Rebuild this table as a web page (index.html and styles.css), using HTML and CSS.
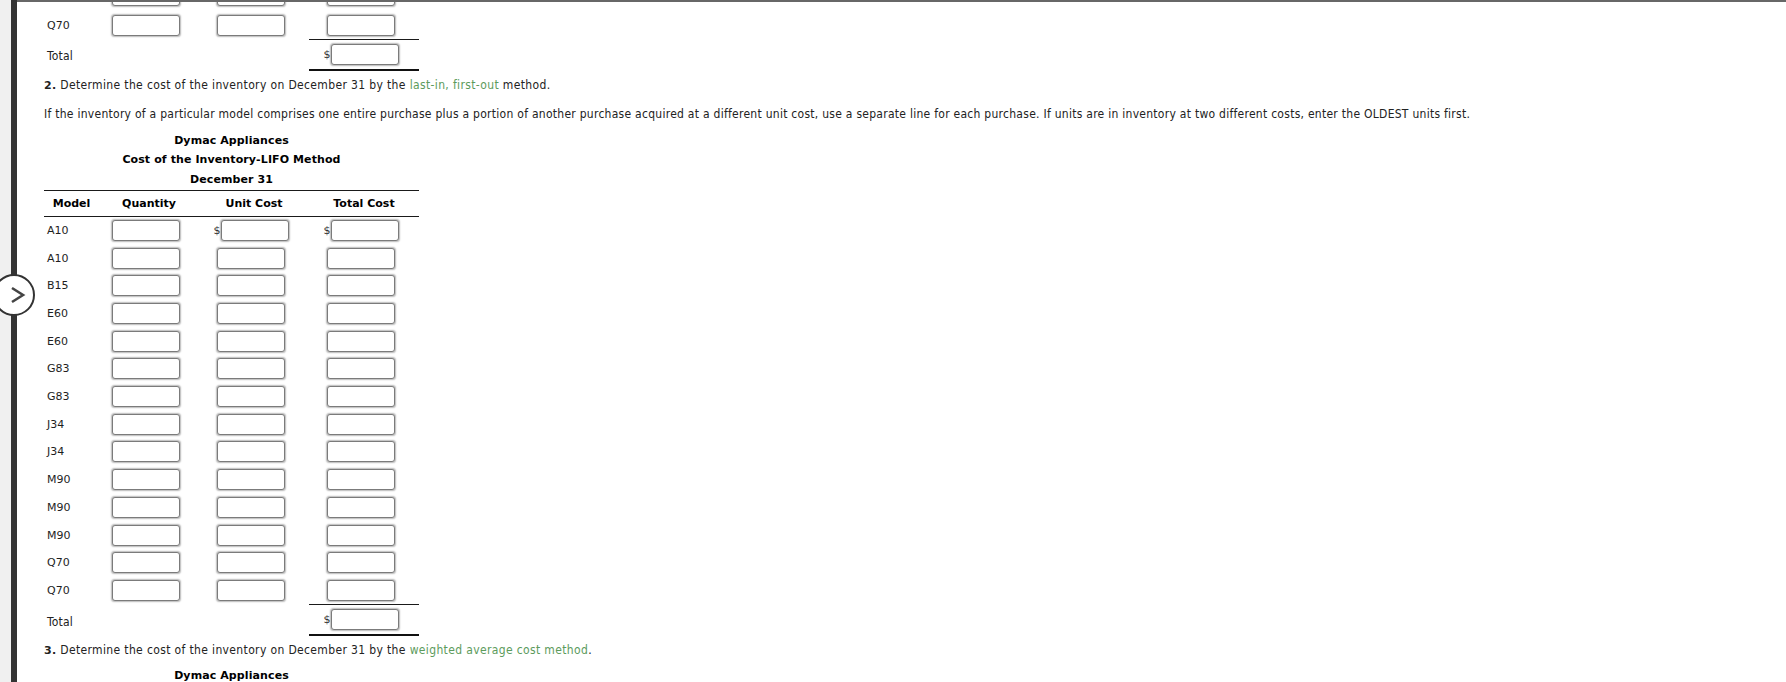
FILE: index.html
```html
<!DOCTYPE html>
<html lang="en">
<head>
<meta charset="utf-8">
<title>Dymac Appliances - Inventory</title>
<link rel="stylesheet" href="styles.css">
</head>
<body>
<div class="page">
  <div class="gutter"></div>
  <div class="rail"></div>
  <main class="main">
    <div class="sheet">
      <div class="inv inv-tail">
        <div class="cell label cut">Q70</div>
        <div class="cell field cut"><input class="box" type="text"></div>
        <div class="cell field cut"><input class="box" type="text"></div>
        <div class="cell field cut"><input class="box" type="text"></div>

        <div class="cell label">Q70</div>
        <div class="cell field"><input class="box" type="text"></div>
        <div class="cell field"><input class="box" type="text"></div>
        <div class="cell field"><input class="box" type="text"></div>

        <div class="cell label total-label tot">Total</div>
        <div class="cell tot"></div>
        <div class="cell tot"></div>
        <div class="cell field tot tot-sum"><span class="cur">$</span><input class="box" type="text"></div>
      </div>

      <p class="q"><b class="num">2.</b> Determine the cost of the inventory on December 31 by the <span class="term">last-in, first-out</span> method.</p>
      <p class="note">If the inventory of a particular model comprises one entire purchase plus a portion of another purchase acquired at a different unit cost, use a separate line for each purchase. If units are in inventory at two different costs, enter the OLDEST units first.</p>

      <div class="report">
        <div class="titles">
          <div class="title">Dymac Appliances</div>
          <div class="title">Cost of the Inventory-LIFO Method</div>
          <div class="title">December 31</div>
        </div>
        <div class="inv">
          <div class="head">Model</div>
          <div class="head">Quantity</div>
          <div class="head">Unit Cost</div>
          <div class="head">Total Cost</div>

          <div class="cell label">A10</div>
          <div class="cell field"><input class="box" type="text"></div>
          <div class="cell field"><span class="cur">$</span><input class="box" type="text"></div>
          <div class="cell field"><span class="cur">$</span><input class="box" type="text"></div>

          <div class="cell label">A10</div>
          <div class="cell field"><input class="box" type="text"></div>
          <div class="cell field"><input class="box" type="text"></div>
          <div class="cell field"><input class="box" type="text"></div>

          <div class="cell label">B15</div>
          <div class="cell field"><input class="box" type="text"></div>
          <div class="cell field"><input class="box" type="text"></div>
          <div class="cell field"><input class="box" type="text"></div>

          <div class="cell label">E60</div>
          <div class="cell field"><input class="box" type="text"></div>
          <div class="cell field"><input class="box" type="text"></div>
          <div class="cell field"><input class="box" type="text"></div>

          <div class="cell label">E60</div>
          <div class="cell field"><input class="box" type="text"></div>
          <div class="cell field"><input class="box" type="text"></div>
          <div class="cell field"><input class="box" type="text"></div>

          <div class="cell label">G83</div>
          <div class="cell field"><input class="box" type="text"></div>
          <div class="cell field"><input class="box" type="text"></div>
          <div class="cell field"><input class="box" type="text"></div>

          <div class="cell label">G83</div>
          <div class="cell field"><input class="box" type="text"></div>
          <div class="cell field"><input class="box" type="text"></div>
          <div class="cell field"><input class="box" type="text"></div>

          <div class="cell label">J34</div>
          <div class="cell field"><input class="box" type="text"></div>
          <div class="cell field"><input class="box" type="text"></div>
          <div class="cell field"><input class="box" type="text"></div>

          <div class="cell label">J34</div>
          <div class="cell field"><input class="box" type="text"></div>
          <div class="cell field"><input class="box" type="text"></div>
          <div class="cell field"><input class="box" type="text"></div>

          <div class="cell label">M90</div>
          <div class="cell field"><input class="box" type="text"></div>
          <div class="cell field"><input class="box" type="text"></div>
          <div class="cell field"><input class="box" type="text"></div>

          <div class="cell label">M90</div>
          <div class="cell field"><input class="box" type="text"></div>
          <div class="cell field"><input class="box" type="text"></div>
          <div class="cell field"><input class="box" type="text"></div>

          <div class="cell label">M90</div>
          <div class="cell field"><input class="box" type="text"></div>
          <div class="cell field"><input class="box" type="text"></div>
          <div class="cell field"><input class="box" type="text"></div>

          <div class="cell label">Q70</div>
          <div class="cell field"><input class="box" type="text"></div>
          <div class="cell field"><input class="box" type="text"></div>
          <div class="cell field"><input class="box" type="text"></div>

          <div class="cell label">Q70</div>
          <div class="cell field"><input class="box" type="text"></div>
          <div class="cell field"><input class="box" type="text"></div>
          <div class="cell field"><input class="box" type="text"></div>

          <div class="cell label total-label tot">Total</div>
          <div class="cell tot"></div>
          <div class="cell tot"></div>
          <div class="cell field tot tot-sum"><span class="cur">$</span><input class="box" type="text"></div>
        </div>
      </div>

      <p class="q q3"><b class="num">3.</b> Determine the cost of the inventory on December 31 by the <span class="term">weighted average cost method</span>.</p>

      <div class="report report-next">
        <div class="titles">
          <div class="title">Dymac Appliances</div>
        </div>
      </div>
    </div>
  </main>
  <button class="nav" type="button" aria-label="Next">
    <svg width="18" height="20" viewBox="0 0 18 20" aria-hidden="true">
      <path d="M4 3 L15 10 L4 17" fill="none" stroke="#444" stroke-width="2.6" stroke-linecap="butt" stroke-linejoin="miter"/>
    </svg>
  </button>
</div>
</body>
</html>
```

FILE: styles.css
```css
* {
  box-sizing: border-box;
}

html, body {
  margin: 0;
  padding: 0;
  background: #ffffff;
}

.page {
  position: relative;
  display: flex;
  height: 100vh;
  overflow: hidden;
}

.gutter {
  width: 11px;
  flex: 0 0 11px;
  background: #f0f0f0;
}

.rail {
  width: 6px;
  flex: 0 0 6px;
  background: #333333;
}

.main {
  flex: 1 1 auto;
  border-top: 2px solid #676767;
  overflow: hidden;
  padding-left: 27px;
}

.sheet {
  margin-top: -18.4px;
}

.inv {
  display: grid;
  grid-template-columns: 55px 100px 110px 110px;
  width: 375px;
}

.cell {
  height: 27.7px;
  display: flex;
  align-items: center;
}

.label {
  padding-left: 3px;
  font-family: "DejaVu Sans", Verdana, sans-serif;
  font-size: 11px;
  color: #1e1e1e;
}

.total-label {
  font-family: "DejaVu Sans Condensed", "DejaVu Sans", sans-serif;
  font-size: 12px;
  letter-spacing: 0.2px;
  color: #222;
  padding-top: 3px;
}

.field {
  justify-content: center;
  padding-right: 6px;
}

.cut .box {
  margin-bottom: 4.5px;
}

.cut.label {
  padding-bottom: 4.5px;
}

.box {
  width: 68px;
  height: 21px;
  margin: 0;
  padding: 0 3px;
  border: 1px solid #7b7b7b;
  border-radius: 3px;
  background: #fff;
  box-shadow: 0 0 1.5px 0.5px rgba(0, 0, 0, 0.28);
  font: 11px "DejaVu Sans", sans-serif;
}

.cur {
  width: 7px;
  font-family: "DejaVu Sans", sans-serif;
  font-size: 11px;
  color: #333;
  line-height: 1;
}

.tot {
  height: 31.7px;
}

.tot-sum {
  border-top: 1px solid #1a1a1a;
  border-bottom: 2px solid #111;
}

.q,
.note {
  margin: 0;
  font-family: "DejaVu Sans Condensed", "DejaVu Sans", sans-serif;
  font-size: 12px;
  letter-spacing: 0.27px;
  line-height: 15px;
  color: #222;
  white-space: nowrap;
}

.q {
  margin-top: 7.5px;
  letter-spacing: 0.36px;
}

.q3 {
  margin-top: 7px;
}

.note {
  margin-top: 13.6px;
}

.num {
  font-family: "DejaVu Sans", sans-serif;
  font-size: 11px;
  font-weight: bold;
  letter-spacing: 0.3px;
}

.term {
  color: #5c9b5c;
}

.report {
  margin-top: 9.25px;
}

.report-next {
  margin-top: 8.15px;
}

.titles {
  width: 375px;
  margin-bottom: 1.35px;
}

.title {
  text-align: center;
  font-family: "DejaVu Sans", Verdana, sans-serif;
  font-weight: bold;
  font-size: 11px;
  letter-spacing: 0.1px;
  line-height: 19.3px;
  color: #000;
}

.head {
  height: 26.4px;
  display: flex;
  align-items: center;
  justify-content: center;
  border-top: 1px solid #1a1a1a;
  border-bottom: 1px solid #1a1a1a;
  font-family: "DejaVu Sans", Verdana, sans-serif;
  font-weight: bold;
  font-size: 11px;
  color: #000;
}

.nav {
  position: absolute;
  left: -7px;
  top: 274px;
  width: 42px;
  height: 42px;
  padding: 0 0 0 6px;
  border: 2px solid #333;
  border-radius: 50%;
  background: #fff;
  display: flex;
  align-items: center;
  justify-content: center;
}
```
